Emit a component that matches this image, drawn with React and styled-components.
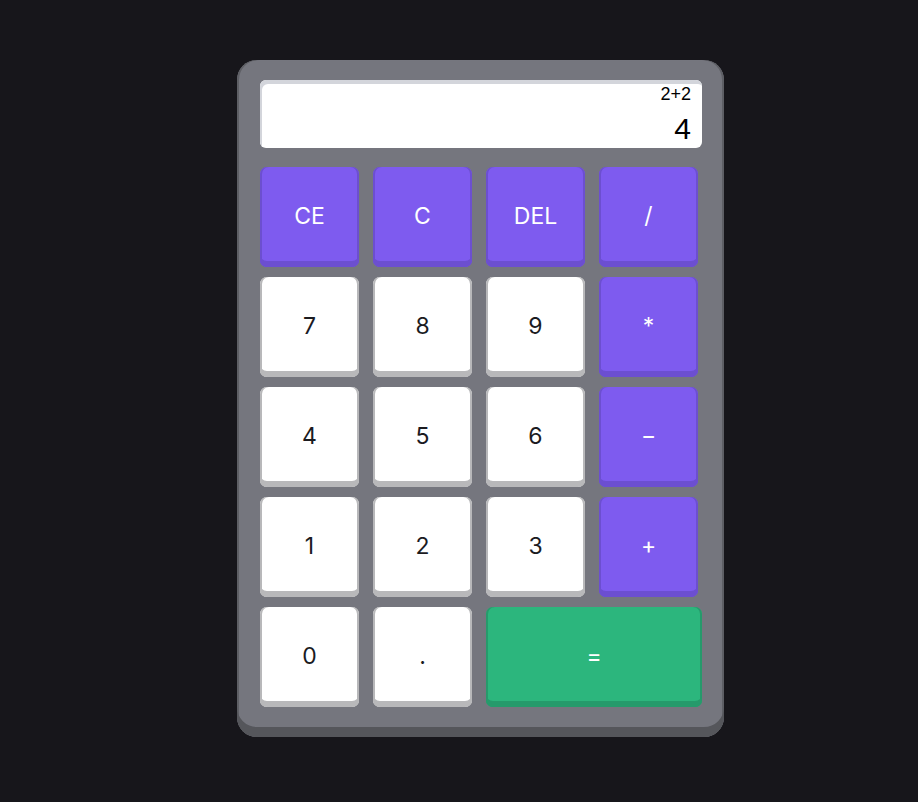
import React from "react";
import styled, { createGlobalStyle } from "styled-components";

const keys = [
  { label: "CE", kind: "op" },
  { label: "C", kind: "op" },
  { label: "DEL", kind: "op" },
  { label: "/", kind: "op" },
  { label: "7" },
  { label: "8" },
  { label: "9" },
  { label: "*", kind: "op" },
  { label: "4" },
  { label: "5" },
  { label: "6" },
  { label: "−", kind: "op" },
  { label: "1" },
  { label: "2" },
  { label: "3" },
  { label: "+", kind: "op" },
  { label: "0" },
  { label: "." },
  { label: "=", kind: "eq" },
];

const palette = {
  num: { face: "#ffffff", shade: "#b8b8ba", text: "#1b1b1f" },
  op: { face: "#7e5bef", shade: "#6c4fd0", text: "#ffffff" },
  eq: { face: "#2cb67d", shade: "#269a6b", text: "#ffffff" },
};

export default function App() {
  return (
    <>
      <GlobalStyle />
      <Page>
        <Calculator>
          <Display>
            <Expression>2+2</Expression>
            <Result>4</Result>
          </Display>
          <Keypad>
            {keys.map((k) => (
              <Key key={k.label} $kind={k.kind || "num"} $wide={k.kind === "eq"}>
                {k.label}
              </Key>
            ))}
          </Keypad>
        </Calculator>
      </Page>
    </>
  );
}

const GlobalStyle = createGlobalStyle`
  html, body {
    margin: 0;
    padding: 0;
    background: #17161b;
  }
  body {
    font-family: Inter, "Noto Sans", sans-serif;
  }
`;

const Page = styled.div`
  min-height: 802px;
  display: flex;
  align-items: flex-start;
  padding: 60px 0 0 237px;
  box-sizing: border-box;
`;

const Calculator = styled.div`
  width: 487px;
  box-sizing: border-box;
  padding: 20px 22px 30px 23px;
  background: #75767e;
  border-radius: 20px;
  box-shadow:
    inset 0 -10px 0 #55565b,
    inset 2px 0 0 #5e5f65,
    inset -2px 0 0 #5e5f65;
`;

const Display = styled.div`
  height: 68px;
  box-sizing: border-box;
  background: #ffffff;
  border-radius: 6px;
  box-shadow: inset 2px 4px 0 #d3d5db;
  padding: 3px 11px 0 0;
  display: flex;
  flex-direction: column;
  align-items: flex-end;
  font-family: "Liberation Sans", Arial, sans-serif;
  color: #000;
`;

const Expression = styled.div`
  font-size: 18px;
  line-height: 22px;
`;

const Result = styled.div`
  font-size: 30px;
  line-height: 34px;
  margin-top: 7px;
`;

const Keypad = styled.div`
  margin-top: 19px;
  display: grid;
  grid-template-columns: repeat(4, 99px);
  grid-auto-rows: 100px;
  column-gap: 14px;
  row-gap: 10px;
`;

const Key = styled.button`
  grid-column: ${(p) => (p.$wide ? "span 2" : "auto")};
  width: ${(p) => (p.$wide ? "216px" : "99px")};
  height: 100px;
  border: none;
  border-radius: 7px;
  padding: 0 0 2px;
  background: ${(p) => palette[p.$kind].face};
  color: ${(p) => palette[p.$kind].text};
  box-shadow:
    inset 0 -6px 0 ${(p) => palette[p.$kind].shade},
    inset 2px 0 0 ${(p) => palette[p.$kind].shade},
    inset -2px 0 0 ${(p) => palette[p.$kind].shade};
  font-family: Inter, "Noto Sans", sans-serif;
  font-size: 23px;
  font-weight: 400;
  display: flex;
  align-items: center;
  justify-content: center;
  cursor: pointer;
`;
